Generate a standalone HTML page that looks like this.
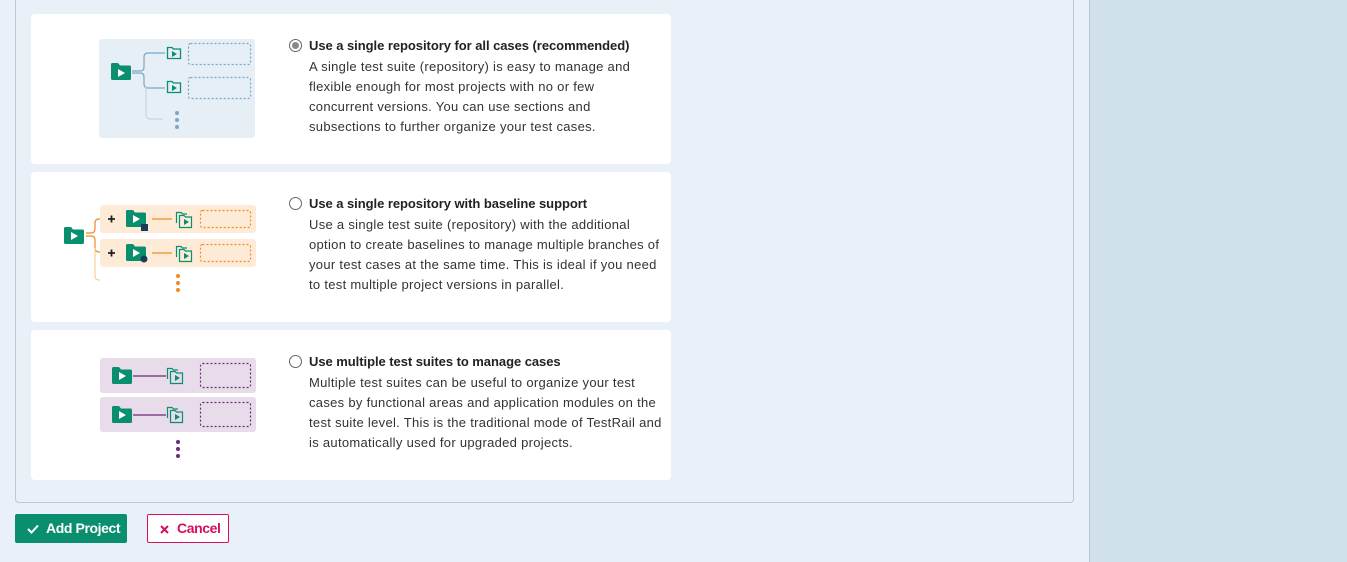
<!DOCTYPE html>
<html><head><meta charset="utf-8"><style>
*{margin:0;padding:0;box-sizing:border-box}
body{width:1347px;height:562px;background:#e9f0f7;position:relative;overflow:hidden;font-family:"Liberation Sans",sans-serif;color:#333}
.side{position:absolute;left:1089px;top:0;width:258px;height:562px;background:#d1e1eb;border-left:1px solid #b5c8d6}
.outer{position:absolute;left:15px;top:-10px;width:1059px;height:513px;border:1px solid #b9c9d8;border-radius:4px}
.card{position:absolute;left:31px;width:640px;height:150px;background:#fff;border-radius:4px}
.t{position:absolute;left:309px;font-size:13px;font-weight:bold;letter-spacing:-0.05px;color:#222;white-space:nowrap}
.d{position:absolute;left:309px;font-size:13px;line-height:20px;letter-spacing:0.3px;color:#333;white-space:nowrap}
.r{position:absolute;left:289px;width:13px;height:13px;border:1px solid #666;border-radius:50%;background:#fff}
.r.on::after{content:"";position:absolute;left:2px;top:2px;width:7px;height:7px;border-radius:50%;background:#888}
.btn{position:absolute;top:514px;height:29px;font-size:14px;font-weight:bold;letter-spacing:-0.4px;border-radius:2px;line-height:27px}
</style></head><body>
<div class="side"></div>
<div class="outer"></div>
<div class="card" style="top:14px"></div>
<div class="card" style="top:172px"></div>
<div class="card" style="top:330px"></div>

<div class="r on" style="top:39px"></div>
<div class="t" style="top:38px">Use a single repository for all cases (recommended)</div>
<div class="d" style="top:57px">A single test suite (repository) is easy to manage and<br>flexible enough for most projects with no or few<br>concurrent versions. You can use sections and<br>subsections to further organize your test cases.</div>

<div class="r" style="top:197px"></div>
<div class="t" style="top:196px">Use a single repository with baseline support</div>
<div class="d" style="top:215px">Use a single test suite (repository) with the additional<br>option to create baselines to manage multiple branches of<br>your test cases at the same time. This is ideal if you need<br>to test multiple project versions in parallel.</div>

<div class="r" style="top:355px"></div>
<div class="t" style="top:354px">Use multiple test suites to manage cases</div>
<div class="d" style="top:373px">Multiple test suites can be useful to organize your test<br>cases by functional areas and application modules on the<br>test suite level. This is the traditional mode of TestRail and<br>is automatically used for upgraded projects.</div>

<svg width="1347" height="562" style="position:absolute;left:0;top:0">
<defs>
<path id="F" d="M0 1.5Q0 0 1.5 0H7L9 2.5H18.5Q20 2.5 20 4V15.5Q20 17 18.5 17H1.5Q0 17 0 15.5Z"/>
</defs>
<rect x="99" y="39" width="156" height="99" rx="3" fill="#e6eef6"/>
<g fill="none" stroke="#7aa7c9" stroke-width="1.2">
<path d="M132 71H140Q144 71 144 67V57Q144 53 148 53H165"/>
<path d="M132 73H140Q144 73 144 77V84Q144 88 148 88H165"/>
<path d="M146 86V115Q146 119 150 119H163" stroke="#c2d6e6"/>
<rect x="188.5" y="43.5" width="62" height="21" rx="2" stroke-dasharray="2 2"/>
<rect x="188.5" y="77.5" width="62" height="21" rx="2" stroke-dasharray="2 2"/>
</g>
<g transform="translate(111,63)"><use href="#F" fill="#0a8f6e"/><path d="M7 6L14 10L7 14Z" fill="#fff"/></g>
<g fill="none" stroke="#0a8f6e" stroke-width="1.3">
<path d="M167.5 47.5H172L173.5 49H180.5V58.5H167.5Z"/><path d="M167.5 81.5H172L173.5 83H180.5V92.5H167.5Z"/>
</g>
<path d="M172 51L177 54L172 57Z M172 85L177 88L172 91Z" fill="#0a8f6e"/>
<g fill="#7aa7c9"><circle cx="177" cy="113" r="2"/><circle cx="177" cy="120" r="2"/><circle cx="177" cy="127" r="2"/></g>
<rect x="100" y="205" width="156" height="28" rx="3" fill="#fdebd8"/>
<rect x="100" y="239" width="156" height="28" rx="3" fill="#fdebd8"/>
<g fill="none" stroke="#ef8a22" stroke-width="1.2">
<path d="M86 233H91Q95 233 95 229V223Q95 219 99 219H100"/>
<path d="M86 236H91Q95 236 95 240V248Q95 252 99 252H100"/>
<path d="M95 248V276Q95 280 99 280H100" stroke="#fbcf9f"/>
<path d="M152 219H172M152 253H172"/>
<rect x="200.5" y="210.5" width="50" height="17" rx="2" stroke-dasharray="2 2"/>
<rect x="200.5" y="244.5" width="50" height="17" rx="2" stroke-dasharray="2 2"/>
</g>
<g transform="translate(64,227)"><use href="#F" fill="#0a8f6e"/><path d="M7 5L14 9L7 13Z" fill="#fff"/></g>
<g transform="translate(126,210)"><use href="#F" fill="#0a8f6e"/><path d="M7 5L14 9L7 13Z" fill="#fff"/></g>
<g transform="translate(126,244)"><use href="#F" fill="#0a8f6e"/><path d="M7 5L14 9L7 13Z" fill="#fff"/></g>
<rect x="141" y="224" width="7" height="7" fill="#1c3a5a"/>
<circle cx="144" cy="259" r="3.5" fill="#1c3a5a"/>
<path d="M108 219H115M111.5 215.5V222.5M108 253H115M111.5 249.5V256.5" stroke="#222" stroke-width="1.8"/>
<g fill="none" stroke="#0a8f6e" stroke-width="1.2">
<path d="M176.5 223V212.5H181L182.5 214H187"/><path d="M179.5 226V215.5H184L185.5 217H191.5V227.5H179.5Z"/>
<path d="M176.5 257V246.5H181L182.5 248H187"/><path d="M179.5 260V249.5H184L185.5 251H191.5V261.5H179.5Z"/>
</g>
<path d="M184 219L189 222L184 225ZM184 253L189 256L184 259Z" fill="#0a8f6e"/>
<g fill="#ef8a22"><circle cx="178" cy="276" r="2"/><circle cx="178" cy="283" r="2"/><circle cx="178" cy="290" r="2"/></g>
<rect x="100" y="358" width="156" height="35" rx="3" fill="#e8dcea"/>
<rect x="100" y="397" width="156" height="35" rx="3" fill="#e8dcea"/>
<g fill="none" stroke="#6b2a7a" stroke-width="1.2">
<path d="M133 376H166M133 415H166"/>
<rect x="200.5" y="363.5" width="50" height="24" rx="2" stroke-dasharray="2 2"/>
<rect x="200.5" y="402.5" width="50" height="24" rx="2" stroke-dasharray="2 2"/>
</g>
<g transform="translate(112,367)"><use href="#F" fill="#0a8f6e"/><path d="M7 5L14 9L7 13Z" fill="#fff"/></g>
<g transform="translate(112,406)"><use href="#F" fill="#0a8f6e"/><path d="M7 5L14 9L7 13Z" fill="#fff"/></g>
<g fill="none" stroke="#0a8f6e" stroke-width="1.2">
<path d="M167.5 379V368.5H172L173.5 370H178"/><path d="M170.5 382V371.5H175L176.5 373H182.5V383.5H170.5Z"/>
<path d="M167.5 418V407.5H172L173.5 409H178"/><path d="M170.5 421V410.5H175L176.5 412H182.5V422.5H170.5Z"/>
</g>
<path d="M175 375L180 378L175 381ZM175 414L180 417L175 420Z" fill="#0a8f6e"/>
<g fill="#6b2a7a"><circle cx="178" cy="442" r="2"/><circle cx="178" cy="449" r="2"/><circle cx="178" cy="456" r="2"/></g>
</svg>

<div class="btn" style="left:15px;width:112px;background:#0a8f6e;color:#fff;border:1px solid #0a8f6e">
<svg width="12" height="10" style="position:absolute;left:11px;top:9px"><path d="M1 5L4.5 8.5L11 1.5" stroke="#fff" stroke-width="2" fill="none"/></svg>
<span style="position:absolute;left:30px">Add Project</span></div>
<div class="btn" style="left:147px;width:82px;background:#fff;color:#d4115a;border:1px solid #d4115a">
<svg width="9" height="9" style="position:absolute;left:12px;top:10px"><path d="M1 1L8 8M8 1L1 8" stroke="#d4115a" stroke-width="2"/></svg>
<span style="position:absolute;left:29px">Cancel</span></div>
</body></html>
